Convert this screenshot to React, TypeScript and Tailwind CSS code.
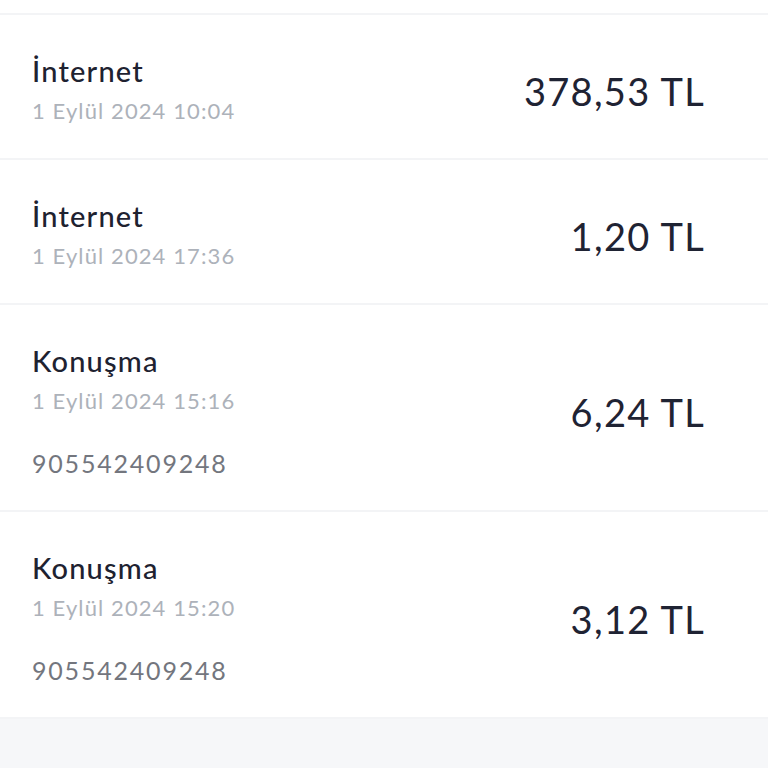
import React from 'react';

interface Usage {
  id: number;
  title: string;
  date: string;
  amount: string;
  phone?: string;
}

const USAGES: Usage[] = [
  { id: 1, title: 'İnternet', date: '1 Eylül 2024 10:04', amount: '378,53 TL' },
  { id: 2, title: 'İnternet', date: '1 Eylül 2024 17:36', amount: '1,20 TL' },
  { id: 3, title: 'Konuşma', date: '1 Eylül 2024 15:16', amount: '6,24 TL', phone: '905542409248' },
  { id: 4, title: 'Konuşma', date: '1 Eylül 2024 15:20', amount: '3,12 TL', phone: '905542409248' },
];

const UsageRow: React.FC<{ item: Usage }> = ({ item }) => (
  <div className="flex items-center justify-between pl-[32px] pr-[63px] pt-[36px] pb-[27px] border-b-2 border-[#f3f4f6]">
    <div className="flex flex-col">
      <span className="text-[29px] leading-[40px] tracking-[1.2px] font-medium text-[#1e2230]">{item.title}</span>
      <span className="text-[22px] leading-[40px] tracking-[1.1px] text-[#adb2ba]">{item.date}</span>
      {item.phone && (
        <span className="mt-[22px] text-[25px] leading-[40px] tracking-[1.8px] text-[#73767e]">{item.phone}</span>
      )}
    </div>
    <span className="text-[38px] leading-[48px] tracking-[1.3px] text-[#1f2333]">{item.amount}</span>
  </div>
);

export default function App() {
  return (
    <div className="min-h-screen bg-[#f6f7f9]" style={{ fontFamily: 'Lato, "Noto Sans", sans-serif' }}>
      <div className="bg-white">
        <div className="h-[15px] border-b-2 border-[#f3f4f6]" />
        {USAGES.map((u) => (
          <UsageRow key={u.id} item={u} />
        ))}
      </div>
    </div>
  );
}
